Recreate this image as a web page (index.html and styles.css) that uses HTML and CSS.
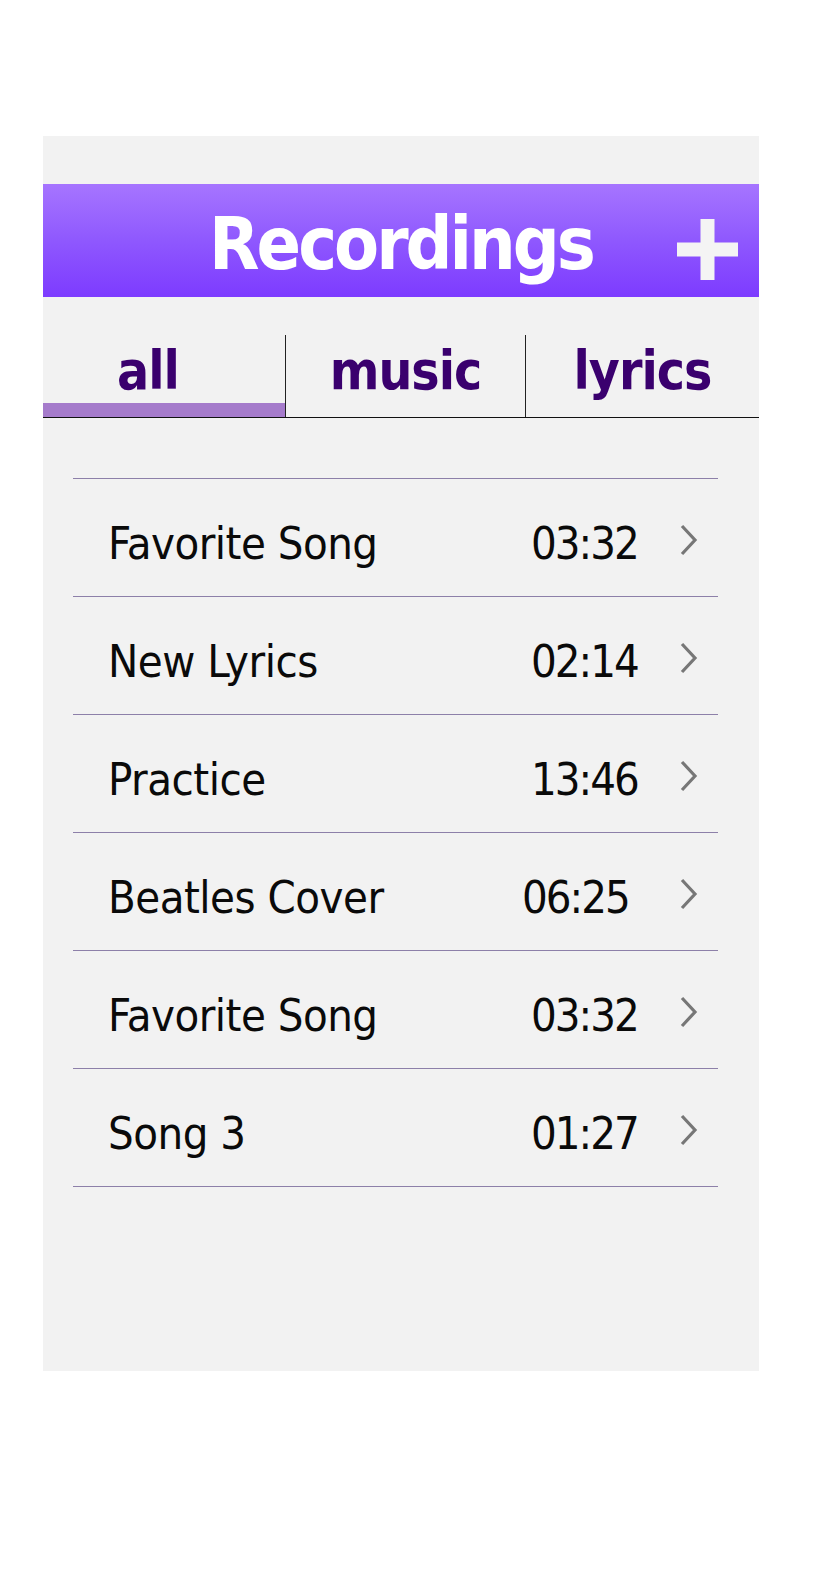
FILE: index.html
```html
<!DOCTYPE html>
<html>
<head>
<meta charset="utf-8">
<link rel="stylesheet" href="styles.css">
</head>
<body>
<div class="screen">
  <header class="header">
    <div></div>
    <h1 class="title">Recordings</h1>
    <button class="add" aria-label="Add">
      <svg width="61" height="61" viewBox="0 0 61 61"><rect x="23.5" y="0" width="14" height="61" fill="#f4f4f4"/><rect x="0" y="23.5" width="61" height="14" fill="#f4f4f4"/></svg>
    </button>
  </header>
  <nav class="tabs">
    <div class="tab tab-all active"><span>all</span></div>
    <div class="tab tab-music"><span>music</span></div>
    <div class="tab tab-lyrics"><span>lyrics</span></div>
  </nav>
  <ul class="list">
    <li class="row"><span class="name">Favorite Song</span><span class="time">03:32</span><svg class="chev" width="18" height="32" viewBox="0 0 18 32"><polyline points="2,2 15,16 2,30" fill="none" stroke="#777" stroke-width="3.2"/></svg></li>
    <li class="row"><span class="name">New Lyrics</span><span class="time">02:14</span><svg class="chev" width="18" height="32" viewBox="0 0 18 32"><polyline points="2,2 15,16 2,30" fill="none" stroke="#777" stroke-width="3.2"/></svg></li>
    <li class="row"><span class="name">Practice</span><span class="time">13:46</span><svg class="chev" width="18" height="32" viewBox="0 0 18 32"><polyline points="2,2 15,16 2,30" fill="none" stroke="#777" stroke-width="3.2"/></svg></li>
    <li class="row"><span class="name">Beatles Cover</span><span class="time time-shift">06:25</span><svg class="chev" width="18" height="32" viewBox="0 0 18 32"><polyline points="2,2 15,16 2,30" fill="none" stroke="#777" stroke-width="3.2"/></svg></li>
    <li class="row"><span class="name">Favorite Song</span><span class="time">03:32</span><svg class="chev" width="18" height="32" viewBox="0 0 18 32"><polyline points="2,2 15,16 2,30" fill="none" stroke="#777" stroke-width="3.2"/></svg></li>
    <li class="row"><span class="name">Song 3</span><span class="time">01:27</span><svg class="chev" width="18" height="32" viewBox="0 0 18 32"><polyline points="2,2 15,16 2,30" fill="none" stroke="#777" stroke-width="3.2"/></svg></li>
  </ul>
</div>
</body>
</html>
```
FILE: styles.css
```css
html, body {
  margin: 0;
  padding: 0;
  background: #ffffff;
}
body {
  padding-top: 136px;
  font-family: "DejaVu Sans Condensed", "DejaVu Sans", sans-serif;
}
.screen {
  margin-left: 43px;
  width: 716px;
  height: 1235px;
  background: #f2f2f2;
  padding-top: 48px;
  box-sizing: border-box;
}
.header {
  height: 113px;
  background: linear-gradient(to bottom, #a675ff 0%, #8f58fe 50%, #7d3bff 100%);
  display: grid;
  grid-template-columns: 1fr auto 1fr;
  align-items: center;
}
.title {
  margin: 0;
  color: #ffffff;
  font-weight: bold;
  font-size: 73px;
  line-height: 1;
  letter-spacing: -3px;
  padding-top: 6px;
}
.add {
  justify-self: end;
  margin-right: 21px;
  margin-top: 18px;
  padding: 0;
  border: 0;
  background: none;
  display: block;
  line-height: 0;
}
.tabs {
  height: 121px;
  display: grid;
  grid-template-columns: 242px 240px 234px;
  border-bottom: 1px solid #111;
  box-sizing: border-box;
}
.tab {
  margin-top: 38px;
  display: flex;
  align-items: flex-start;
  justify-content: center;
  position: relative;
  color: #3a006e;
  font-weight: bold;
  font-size: 53px;
  letter-spacing: -1px;
  line-height: 1;
}
.tab span {
  margin-top: 9px;
}
.tab-all span {
  margin-right: 32px;
}
.tab-music, .tab-lyrics {
  border-left: 1px solid #222;
}
.tab.active::after {
  content: "";
  position: absolute;
  left: 0;
  right: 0;
  bottom: 0;
  height: 14px;
  background: #a57bcb;
}
.list {
  list-style: none;
  margin: 60px 41px 0 30px;
  padding: 0;
  border-top: 1px solid #8d80a9;
}
.row {
  height: 118px;
  box-sizing: border-box;
  border-bottom: 1px solid #8d80a9;
  display: grid;
  grid-template-columns: 1fr 149px 18px;
  align-items: center;
  padding: 12px 20px 0 35px;
  font-size: 45px;
  letter-spacing: -0.5px;
  color: #0a0a0a;
}
.name, .time {
  line-height: 1;
}
.time {
  letter-spacing: -2px;
}
.time-shift {
  margin-left: -9px;
}
.chev {
  display: block;
  margin-top: -8px;
}
```
